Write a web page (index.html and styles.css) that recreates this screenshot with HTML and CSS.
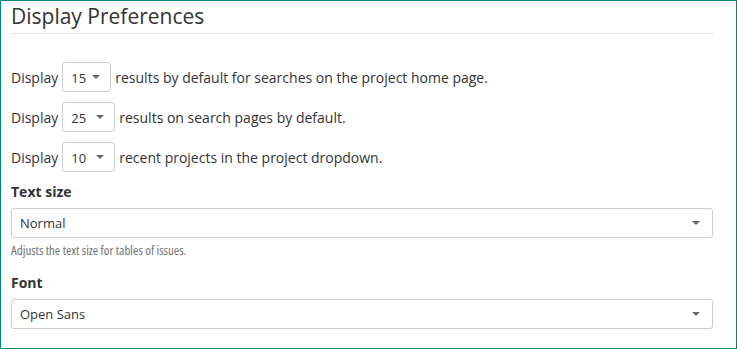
FILE: index.html
```html
<!DOCTYPE html>
<html lang="en">
<head>
<meta charset="utf-8">
<title>Display Preferences</title>
<link rel="stylesheet" href="styles.css">
</head>
<body>
<div class="panel">
  <h2 class="title">Display Preferences</h2>
  <div class="rows">
    <div class="row">
      <span>Display</span>
      <div class="select small w49"><span>15</span><svg class="caret" width="8" height="4" viewBox="0 0 8 4"><path d="M0 0H8L4 4Z"/></svg></div>
      <span>results by default for searches on the project home page.</span>
    </div>
    <div class="row">
      <span>Display</span>
      <div class="select small w53"><span>25</span><svg class="caret" width="8" height="4" viewBox="0 0 8 4"><path d="M0 0H8L4 4Z"/></svg></div>
      <span>results on search pages by default.</span>
    </div>
    <div class="row">
      <span>Display</span>
      <div class="select small w53"><span>10</span><svg class="caret" width="8" height="4" viewBox="0 0 8 4"><path d="M0 0H8L4 4Z"/></svg></div>
      <span>recent projects in the project dropdown.</span>
    </div>
  </div>
  <div class="field">
    <div class="label">Text size</div>
    <div class="select full"><span>Normal</span><svg class="caret" width="8" height="4" viewBox="0 0 8 4"><path d="M0 0H8L4 4Z"/></svg></div>
    <div class="help">Adjusts the text size for tables of issues.</div>
  </div>
  <div class="field font-field">
    <div class="label">Font</div>
    <div class="select full"><span>Open Sans</span><svg class="caret" width="8" height="4" viewBox="0 0 8 4"><path d="M0 0H8L4 4Z"/></svg></div>
  </div>
</div>
</body>
</html>
```
FILE: styles.css
```css
html, body {
  margin: 0;
  padding: 0;
  background: #fff;
}
body {
  font-family: "Open Sans", "Liberation Sans", sans-serif;
  font-size: 14px;
  color: #333;
}
.panel {
  box-sizing: border-box;
  width: 737px;
  height: 349px;
  border: 1px solid #008580;
  padding: 0 23px 0 10px;
}
.title {
  margin: 0;
  padding-top: 3px;
  padding-bottom: 4px;
  font-size: 21px;
  font-weight: 400;
  line-height: 25px;
  color: #333;
  border-bottom: 1px solid #e2e2e2;
}
.rows {
  margin-top: 28px;
  display: flex;
  flex-direction: column;
  gap: 10px;
}
.row {
  display: flex;
  align-items: center;
  height: 30px;
  gap: 4px;
}
.select {
  box-sizing: border-box;
  height: 30px;
  border: 1px solid #ccc;
  border-radius: 3px;
  background: #fff;
  display: flex;
  align-items: center;
  justify-content: space-between;
  padding: 0 10px 0 8px;
  color: #333;
}
.select.small span {
  font-size: 13px;
  padding-top: 2px;
}
.w49 { width: 49px; }
.w53 { width: 53px; }
.select.full {
  width: 100%;
  padding: 0 12px 0 8px;
  font-size: 13px;
}
.caret {
  fill: #666;
  display: block;
}
.field {
  margin-top: 10px;
}
.label {
  font-weight: 700;
  line-height: 20px;
  margin-bottom: 6px;
}
.help {
  margin-top: 4px;
  font-size: 13px;
  font-stretch: 75%;
  line-height: 17px;
  color: #737373;
}
.font-field {
  margin-top: 14px;
}
```
